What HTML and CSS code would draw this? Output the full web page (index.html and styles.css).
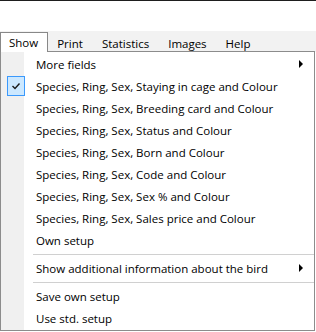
FILE: index.html
```html
<!DOCTYPE html>
<html>
<head>
<meta charset="utf-8">
<link rel="stylesheet" href="styles.css">
</head>
<body>
<div class="topline"></div>
<div class="space"></div>
<div class="menubar">
  <div class="mb-item active">Show</div>
  <div class="mb-item">Print</div>
  <div class="mb-item">Statistics</div>
  <div class="mb-item">Images</div>
  <div class="mb-item">Help</div>
</div>
<div class="dropdown">
  <div class="item"><span class="label">More fields</span><span class="arrow"></span></div>
  <div class="item"><span class="check"><svg width="16" height="16" viewBox="0 0 16 16"><path d="M4.5 8 L7 10.5 L11.5 5.5" fill="none" stroke="#1a1a1a" stroke-width="1.4"/></svg></span><span class="label">Species, Ring, Sex, Staying in cage and Colour</span></div>
  <div class="item"><span class="label">Species, Ring, Sex, Breeding card and Colour</span></div>
  <div class="item"><span class="label">Species, Ring, Sex, Status and Colour</span></div>
  <div class="item"><span class="label">Species, Ring, Sex, Born and Colour</span></div>
  <div class="item"><span class="label">Species, Ring, Sex, Code and Colour</span></div>
  <div class="item"><span class="label">Species, Ring, Sex, Sex % and Colour</span></div>
  <div class="item"><span class="label">Species, Ring, Sex, Sales price and Colour</span></div>
  <div class="item"><span class="label">Own setup</span></div>
  <div class="sep"></div>
  <div class="item"><span class="label">Show additional information about the bird</span><span class="arrow"></span></div>
  <div class="sep"></div>
  <div class="item"><span class="label">Save own setup</span></div>
  <div class="item"><span class="label">Use std. setup</span></div>
</div>
</body>
</html>
```
FILE: styles.css
```css
html, body {
  margin: 0;
  padding: 0;
  background: #ffffff;
  width: 316px;
  height: 332px;
  overflow: hidden;
  font-family: "Open Sans", "Noto Sans", sans-serif;
  font-size: 11.5px;
  color: #000;
}
.topline {
  height: 1px;
  background: #1e1e1e;
}
.space {
  height: 30px;
}
.menubar {
  height: 21px;
  background: #f2f2f2;
  display: flex;
  align-items: flex-end;
}
.mb-item {
  height: 19px;
  line-height: 19px;
  padding: 0 9px 0 8px;
  box-sizing: border-box;
  border: 1px solid transparent;
  border-bottom: none;
}
.mb-item.active {
  background: #fff;
  border-color: #888;
  position: relative;
  z-index: 2;
  height: 20px;
}
.dropdown {
  width: 315px;
  height: 280px;
  box-sizing: border-box;
  border: 1px solid #8c8c8c;
  background: linear-gradient(to right, #f0f0f0 0, #f0f0f0 23px, #fff 23px);
  padding: 1px 0 0 0;
  margin-top: -1px;
  position: relative;
}
.item {
  height: 22px;
  display: flex;
  align-items: center;
  position: relative;
}
.label {
  margin-left: 35px;
  white-space: nowrap;
}
.arrow {
  margin-left: auto;
  margin-right: 11px;
  width: 0;
  height: 0;
  border-top: 4px solid transparent;
  border-bottom: 4px solid transparent;
  border-left: 4px solid #000;
}
.check {
  position: absolute;
  left: 6px;
  top: 1px;
  width: 18px;
  height: 20px;
  box-sizing: border-box;
  background: #cce8ff;
  border: 1px solid #3b99fc;
  display: flex;
  align-items: center;
  justify-content: center;
}
.sep {
  height: 6px;
  display: flex;
  align-items: center;
  padding-left: 32px;
}
.sep::after {
  content: "";
  flex: 1;
  height: 1px;
  background: #d0d0d0;
}
```
